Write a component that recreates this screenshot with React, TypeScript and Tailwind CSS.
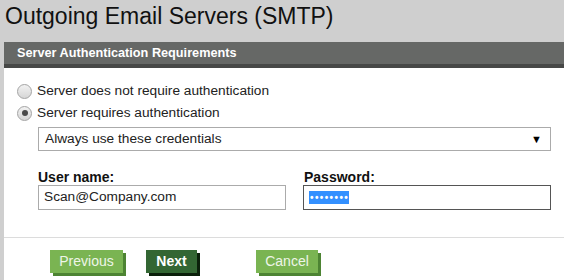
import React from "react";

const Radio: React.FC<{ checked?: boolean; label: string }> = ({ checked, label }) => {
  return (
    <div className="flex items-center h-[22px]">
      <span className="w-[15px] h-[15px] rounded-full border border-[#a4a4a4] bg-gradient-to-b from-[#f2f2f2] to-[#d6d6d6] flex items-center justify-center">
        {checked && <span className="w-[6px] h-[6px] rounded-full bg-[#4a4a4a]" />}
      </span>
      <span className="ml-[5px] text-[13.7px] text-[#222]">{label}</span>
    </div>
  );
};

const Button: React.FC<{ label: string; dark?: boolean; className?: string }> = ({ label, dark, className }) => {
  return (
    <div
      className={
        dark
          ? "h-[23px] flex items-center justify-center bg-[#336633] text-white font-bold text-[14px] shadow-[3px_3px_0_#0b200b] " + (className ?? "")
          : "h-[23px] flex items-center justify-center bg-[#7ab452] text-[#eef4e8] text-[14px] shadow-[3px_3px_0_#4d8433] " + (className ?? "")
      }
    >
      {label}
    </div>
  );
};

const App: React.FC = () => {
  return (
    <div className="w-[564px] h-[280px] overflow-hidden bg-[#cfcfcf] font-['Liberation_Sans',Arial,sans-serif]">
      <h1 className="h-[42px] pl-[5px] pt-[1px] text-[23px] leading-[30px] text-[#111]">
        Outgoing Email Servers (SMTP)
      </h1>
      <div className="ml-[4px] bg-white h-[238px]">
        <div className="h-[26px] bg-[#666866] border-b-[4px] border-[#474847] pl-[13px] text-[12.7px] font-bold text-white leading-[22px]">
          Server Authentication Requirements
        </div>
        <div className="pl-[13px] pt-[12px] pr-[13px]">
          <Radio label="Server does not require authentication" />
          <Radio checked label="Server requires authentication" />
          <div className="ml-[21px] mt-[3px] h-[24px] border border-[#ababab] flex items-center justify-between pl-[6px] pr-[8px] text-[13.7px] text-[#222]">
            <span>Always use these credentials</span>
            <span className="text-[11px] text-black">▼</span>
          </div>
          <div className="ml-[21px] mt-[18px] flex gap-[17px]">
            <div className="flex flex-col w-[248px]">
              <span className="text-[14px] font-bold text-[#111] leading-[16px]">User name:</span>
              <div className="h-[25px] border border-[#ababab] flex items-center pl-[5px] text-[13.7px] text-[#222]">
                Scan@Company.com
              </div>
            </div>
            <div className="flex flex-col flex-1">
              <span className="text-[14px] font-bold text-[#111] leading-[16px] pl-[1px]">Password:</span>
              <div className="h-[25px] border border-[#555] flex items-center pl-[5px]">
                <span className="bg-[#3390ff] text-white text-[10px] leading-[13px] tracking-[1.4px] pl-[1px] font-bold">
                  ••••••••
                </span>
              </div>
            </div>
          </div>
        </div>
        <div className="mt-[27px] border-t border-[#dcdcdc]" />
        <div className="flex pl-[46px] pt-[12px]">
          <Button label="Previous" className="w-[73px]" />
          <Button label="Next" dark className="w-[51px] ml-[23px]" />
          <Button label="Cancel" className="w-[62px] ml-[59px]" />
        </div>
      </div>
    </div>
  );
};

export default App;
